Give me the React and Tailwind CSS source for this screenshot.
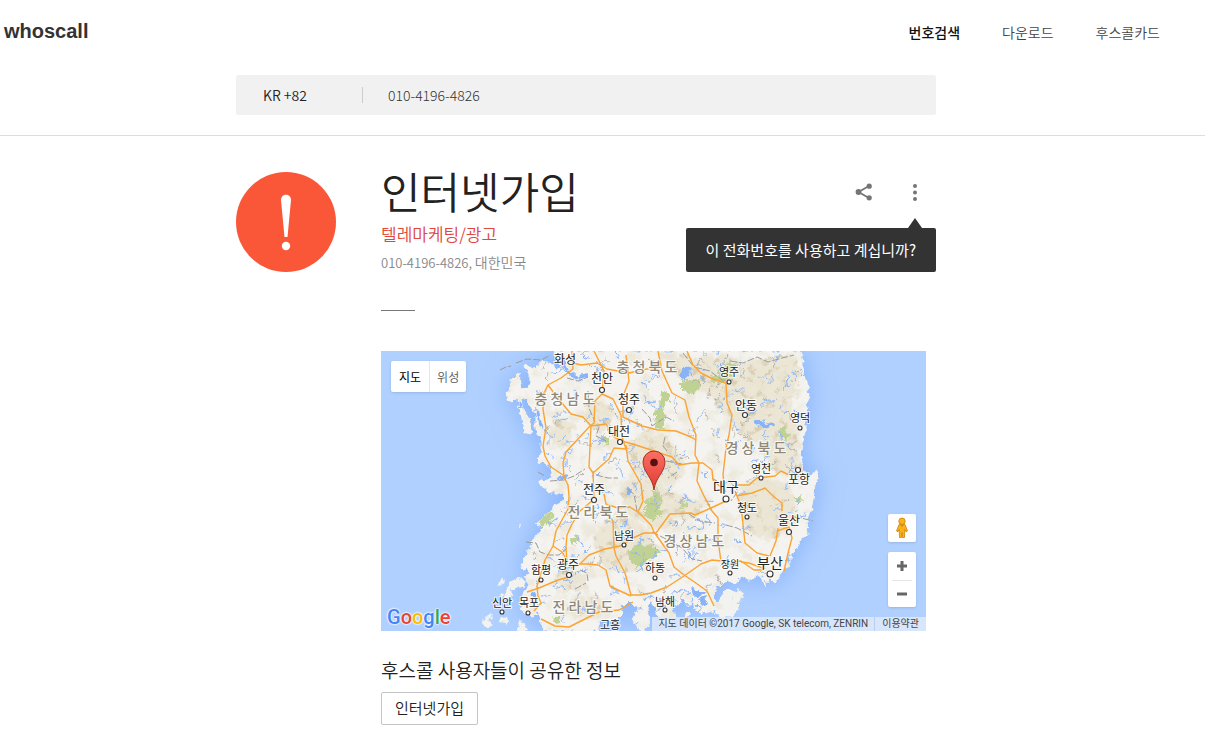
import { useState } from "react";

const LAND =
  "M172 0 L175 8 L182 18 L188 20 L200 24 L196 29 L188 26 L183 21 L167 11 L157 10 L155 18 L143 15 L145 20 L150 31 L148 36 L141 37 L139 30 L138 22 L130 30 L131 36 L125 43 L128 51 L133 48 L137 50 L140 61 L143 81 L150 83 L149 72 L147 65 L142 58 L140 49 L145 46 L151 60 L155 61 L155 81 L161 90 L161 98 L158 111 L164 113 L170 118 L172 128 L160 130 L160 133 L167 141 L170 142 L183 142 L182 150 L173 155 L167 163 L155 173 L162 177 L155 185 L148 198 L140 217 L147 219 L145 227 L148 235 L143 242 L140 250 L143 263 L152 265 L157 260 L160 268 L163 280 L216 280 L221 268 L234 270 L241 263 L239 252 L246 255 L251 250 L257 258 L252 268 L257 277 L269 275 L266 258 L269 248 L274 258 L279 268 L286 270 L294 265 L291 253 L297 254 L302 248 L307 255 L313 251 L316 260 L326 262 L334 258 L338 262 L342 255 L336 250 L332 246 L334 240 L332 235 L339 236 L346 228 L356 232 L359 226 L361 225 L369 230 L375 226 L381 225 L384 235 L389 227 L394 232 L399 225 L403 218 L409 215 L409 207 L416 198 L419 187 L427 185 L426 168 L431 155 L434 135 L437 126 L435 120 L427 126 L421 115 L420 98 L424 81 L424 61 L428 46 L426 31 L422 18 L422 8 L418 0 Z";

const ISLANDS = [
  "M136 227 l9 1 l-2 8 l-5 -2 l-5 6 l-5 -3 l1 -6 z",
  "M121 226 l2 6 l-6 3 z",
  "M124 238 l5 -3 l2 9 l-6 4 z",
  "M118 242 l5 1 l-2 5 z",
  "M103 267 l7 -4 l1 5 l-5 2 l6 4 l-6 3 l-4 -5 z",
  "M119 267 l7 -2 l1 8 l-7 -2 z",
  "M137 268 l5 2 l5 9 l-9 1 z",
  "M137 174 l3 -2 l-1 5 z",
  "M320 236 l11 -4 l4 6 l-4 6 l5 8 l-4 10 l-9 -3 l1 -10 z",
  "M336 252 l10 -14 l8 2 l-3 9 l8 5 l-6 10 l-12 4 l-7 -6 z",
  "M351 242 l7 -4 l5 8 l-5 6 l-4 11 l-6 -2 l4 -9 z",
  "M280 256 l9 2 l7 8 l-6 5 l-12 -2 z",
  "M257 268 l9 5 l-4 7 l-6 -1 z",
  "M303 263 l5 -2 l2 5 l-6 1 z",
];

const INLETS = [
  "M137 50 l7 4 l3 9 l-4 -4 l-6 -5 z",
  "M155 52 l3 10 l4 16 l-5 -4 z",
  "M144 30 l3 -7 l2 6 l-3 3 z",
  "M179 1 l5 6 l3 14 l-5 -4 z",
  "M149 240 l5 2 l3 7 l-7 -3 z",
  "M174 128 l8 -4 l7 1 l-7 4 z",
  "M182 18 l12 7 l13 -3 l-1 4 l-14 3 z",
  "M299 23 l7 -8 l4 2 l-2 7 l-6 5 z",
  "M374 68 l5 0 l5 5 l8 -2 l2 3 l-11 3 l-8 -4 z",
  "M278 247 l6 3 l-2 7 l-4 -3 z",
  "M310 236 l5 4 l8 0 l-4 6 l-7 -2 z",
  "M317 248 l8 -3 l2 8 l-7 2 z",
  "M246 135 l4 2 l-1 8 l-4 -2 z",
];

const HILLS = [
  "M283 6 q16 -5 35 3 q25 -8 43 3 q28 -10 54 -6 q8 20 1 42 q-9 16 -5 30 q-16 20 -30 12 q-22 6 -26 -16 q-17 -11 -26 -30 q-28 -4 -46 -38 z",
  "M247 95 q17 -25 36 -12 q16 18 20 38 q-9 17 -28 10 q-28 -7 -28 -36 z",
  "M237 132 q28 -14 50 6 q22 6 18 26 q-18 20 -35 10 q-25 4 -33 -42 z",
  "M222 170 q21 -12 44 10 q13 18 2 30 q-24 20 -44 7 q-18 -22 -2 -47 z",
  "M171 72 q12 -9 25 3 q-3 19 -18 23 q-11 -12 -7 -26 z",
  "M202 53 q18 -7 30 5 q2 20 -12 24 q-18 -5 -18 -29 z",
  "M362 134 q22 -16 47 2 q11 25 -5 45 q-18 14 -35 1 q-17 -23 -7 -48 z",
  "M382 72 q21 -18 36 2 q-3 21 3 44 q-16 12 -29 1 q-16 -17 -10 -47 z",
  "M174 224 q16 -12 31 3 q-4 18 -23 15 z",
  "M183 248 q20 -10 43 4 q-11 18 -35 15 z",
  "M290 152 q16 -12 33 2 q-7 19 -25 14 z",
];

const FORESTS = [
  "M299 29 l10 1 l10 -3 l2 8 l-9 6 l-13 -2 z",
  "M329 24 l7 -4 l13 -9 l9 2 l-8 8 l-6 11 l-12 -1 z",
  "M280 43 l8 -1 l0 9 l-6 7 l2 8 l-2 12 l-7 -1 l-1 -16 l4 -8 z",
  "M221 86 l6 -1 l1 8 l-5 2 z",
  "M398 78 l7 -2 l5 8 l-6 6 l-6 -5 z",
  "M156 167 l14 -6 l3 6 l-8 7 l-10 2 z",
  "M188 187 l6 -3 l4 5 l-6 6 z",
  "M248 201 l12 -9 l7 4 l9 0 l3 7 l-14 9 l-9 6 l-4 -8 l-5 -3 z",
  "M264 152 l9 -5 l7 6 l0 12 l-9 4 l-7 -4 z",
  "M413 146 l7 -2 l2 7 l-6 2 z",
  "M172 266 l8 0 l-3 6 l-6 -2 z",
  "M271 138 l7 3 l4 9 l-7 -1 z",
  "M300 150 l6 5 l-7 3 z",
  "M330 260 l5 1 l-1 8 l-4 -3 z",
];

const ROADS = [
  "M191 0 L192 18 L180 27 L167 34 L163 42 L162 58 L165 77 L162 95 L164 105 L170 116 L182 124 L187 134 L188 145 L187 158 L175 180 L172 195 L164 209 L161 219 L156 235 L157 245 L160 252 L153 260",
  "M167 34 L176 46 L190 63 L202 66 L210 75 L225 73",
  "M192 12 L200 14 L216 12 L226 18 L248 22 L266 18 L277 17",
  "M213 0 L223 20 L221 43 L214 50 L213 72 L209 75 L185 101 L182 112 L183 126",
  "M221 43 L232 48 L240 64 L241 86 L245 98 L233 97 L228 108 L212 122 L208 116 L210 75",
  "M225 73 L233 86 L241 90",
  "M212 120 L213 150",
  "M245 4 L248 30 L242 45 L242 66 L261 75 L277 79 L295 80 L310 86 L315 89",
  "M277 0 L281 20 L291 42 L304 49 L308 66 L315 84 L314 104 L318 112 L316 130 L323 145 L331 160 L337 167 L337 188 L340 211",
  "M306 0 L312 14 L320 22 L332 28 L345 32 L346 52 L351 64 L348 84 L345 97 L342 124 L344 140",
  "M241 90 L258 95 L276 101 L291 106 L298 114 L311 112 L322 112 L331 119 L332 129 L345 141",
  "M245 94 L247 110 L260 133 L262 150 L257 161 L270 174 L273 181 L288 202 L293 216 L303 224 L312 230 L326 240 L333 255",
  "M223 143 L225 153 L237 157 L249 156 L258 162",
  "M212 149 L199 160 L191 173 L186 184 L185 195 L186 214",
  "M222 158 L232 170 L233 197 L235 205 L244 222 L250 244",
  "M250 244 L259 244 L270 242 L286 236 L303 225 L320 213 L331 209 L350 211 L360 210 L373 219 L382 219",
  "M190 217 L199 213 L208 204 L224 198 L239 195 L252 187 L263 182 L275 182 L289 163 L310 162 L314 164 L330 157 L345 150",
  "M198 213 L207 213 L217 214 L225 219 L229 235 L237 239 L250 245",
  "M188 226 L177 229 L158 237 L146 241",
  "M172 195 L181 201 L187 211",
  "M160 268 L174 275 L188 276 L204 268 L218 261 L238 259 L252 251",
  "M355 134 L368 134 L376 127 L394 125 L400 120 L408 124",
  "M356 145 L371 142 L384 137 L392 145 L401 152 L401 160",
  "M354 140 L358 150 L361 164 L364 192 L376 202 L388 205",
  "M396 180 L408 176 L411 187 L407 202 L403 220",
  "M360 211 L368 212 L384 218",
  "M397 177 L395 190 L389 205",
];

const BORDERS = [
  "M119 19 l6 -3 l5 -1 m5 -3 l11 -4 l14 1 l8 -4",
  "M186 27 l11 3 l10 -4",
  "M157 121 l7 4 m5 5 l14 -1 l10 -4 l11 -7",
  "M145 191 l10 1 l4 9 l9 3 l10 0 l8 -7",
  "M261 58 l8 9 l2 8 l14 -9 l8 4 m-9 16 l-2 9 l4 5 m-1 10 l16 3 m-5 8 l-9 6",
  "M271 181 l12 6 l18 10 l10 11 l10 2",
  "M207 40 l1 17 l6 14 m4 5 l-3 9 l10 5",
  "M349 10 l13 2 l14 -6 l11 5 l14 -4 l12 -3",
  "M302 2 l11 14 l16 4 l12 9 l11 0",
  "M331 127 l11 7 l6 -5 l9 11 l-7 10",
  "M413 166 l7 1 l12 3",
  "M215 124 l12 3 l10 0 m10 12 l6 4 l3 17",
  "M345 174 l11 3 l15 8 m-63 -22 l11 7 l15 2",
  "M199 219 l7 3 l1 8 m-13 8 l11 -6",
];

const CITIES = [
  { name: "화성", x: 184, y: 13, size: 12 },
  { name: "천안", x: 221, y: 32, size: 12, dot: [221, 39] },
  { name: "청주", x: 248, y: 53, size: 12, dot: [248, 59] },
  { name: "대전", x: 238, y: 85, size: 12, dot: [239, 91] },
  { name: "영주", x: 348, y: 25, size: 11, dot: [348, 31] },
  { name: "안동", x: 365, y: 59, size: 12, dot: [364, 64] },
  { name: "영덕", x: 419, y: 71, size: 11, dot: [419, 77] },
  { name: "영천", x: 380, y: 122, size: 11, dot: [380, 127] },
  { name: "포항", x: 418, y: 133, size: 12, dot: [417, 119] },
  { name: "대구", x: 345, y: 141, size: 14, dot: [345, 148] },
  { name: "청도", x: 366, y: 161, size: 11, dot: [366, 166] },
  { name: "울산", x: 408, y: 174, size: 12, dot: [408, 181] },
  { name: "전주", x: 213, y: 143, size: 12, dot: [213, 149] },
  { name: "남원", x: 243, y: 189, size: 11, dot: [243, 194] },
  { name: "함평", x: 160, y: 223, size: 11, dot: [160, 229] },
  { name: "광주", x: 187, y: 218, size: 12, dot: [188, 224] },
  { name: "하동", x: 274, y: 221, size: 11, dot: [274, 227] },
  { name: "장원", x: 349, y: 217, size: 10, dot: [349, 222] },
  { name: "부산", x: 389, y: 217, size: 14, dot: [389, 223] },
  { name: "신안", x: 121, y: 256, size: 11, dot: [121, 261] },
  { name: "목포", x: 148, y: 256, size: 11, dot: [147, 262] },
  { name: "남해", x: 284, y: 255, size: 11, dot: [284, 259] },
  { name: "고흥", x: 229, y: 278, size: 11 },
];

const PROVINCES = [
  { name: "충 청 남 도", x: 184, y: 53 },
  { name: "충 청 북 도", x: 266, y: 21 },
  { name: "경 상 북 도", x: 375, y: 102 },
  { name: "전 라 북 도", x: 217, y: 166 },
  { name: "경 상 남 도", x: 313, y: 195 },
  { name: "전 라 남 도", x: 202, y: 261 },
];

// small streams spread over the land, always the same ones
const makeStreams = (count) => {
  let seed = 17;
  const next = () => {
    seed = (seed * 16807) % 2147483647;
    return seed / 2147483647;
  };
  const streams = [];
  for (let i = 0; i < count; i++) {
    let d = `M${Math.round(150 + next() * 275)} ${Math.round(next() * 270)}`;
    const turn = next() * Math.PI * 2;
    for (let j = 0; j < 4; j++) {
      const a = turn + (next() - 0.5) * 2.4;
      d += ` l${(Math.cos(a) * 3).toFixed(1)} ${(Math.sin(a) * 3).toFixed(1)}`;
    }
    streams.push(d);
  }
  return streams;
};

const STREAMS = makeStreams(230);
const TRAILS = makeStreams(290).slice(230);

const KoreaMap = () => {
  return (
    <svg
      className="block h-[280px] w-full font-['Noto_Sans_CJK_KR',sans-serif]"
      viewBox="0 0 545 280"
      preserveAspectRatio="xMidYMid slice"
      role="img"
      aria-label="지도"
    >
      <defs>
        <clipPath id="land">
          <path d={LAND} />
        </clipPath>
        <filter id="coast" x="-20%" y="-20%" width="140%" height="140%">
          <feGaussianBlur stdDeviation="12" />
        </filter>
        <filter id="soft">
          <feTurbulence type="fractalNoise" baseFrequency="0.09" numOctaves="3" seed="4" result="noise" />
          <feDisplacementMap in="SourceGraphic" in2="noise" scale="16" result="bent" />
          <feGaussianBlur in="bent" stdDeviation="1" />
        </filter>
        <filter id="rough">
          <feTurbulence type="fractalNoise" baseFrequency="0.2" numOctaves="3" seed="9" result="noise" />
          <feDisplacementMap in="SourceGraphic" in2="noise" scale="9" xChannelSelector="R" yChannelSelector="G" />
        </filter>
        <filter id="jagged" colorInterpolationFilters="sRGB">
          <feTurbulence type="fractalNoise" baseFrequency="0.18" numOctaves="2" seed="5" result="noise" />
          <feDisplacementMap in="SourceGraphic" in2="noise" scale="7" xChannelSelector="R" yChannelSelector="G" />
        </filter>
        <filter id="terrain" x="0" y="0" width="100%" height="100%" colorInterpolationFilters="sRGB">
          <feTurbulence type="fractalNoise" baseFrequency="0.07" numOctaves="4" seed="8" />
          <feColorMatrix values="0 0 0 0 0.86  0 0 0 0 0.82  0 0 0 0 0.68  4 0 0 0 -2" />
        </filter>
        <filter id="ridges" x="0" y="0" width="100%" height="100%" colorInterpolationFilters="sRGB">
          <feTurbulence type="fractalNoise" baseFrequency="0.12" numOctaves="3" seed="21" />
          <feColorMatrix values="0 0 0 0 0.78  0 0 0 0 0.71  0 0 0 0 0.57  5 0 0 0 -2.8" result="r" />
          <feComposite in="r" in2="SourceGraphic" operator="in" />
        </filter>
        <linearGradient id="pin" x1="0" y1="0" x2="0" y2="1">
          <stop offset="0" stopColor="#fb7064" />
          <stop offset="1" stopColor="#e03a30" />
        </linearGradient>
      </defs>
      <rect width="545" height="280" fill="#b0d0ff" />
      <path d={LAND} fill="#8ab4fa" stroke="#8ab4fa" strokeWidth="4" filter="url(#coast)" />
      <g filter="url(#jagged)">
        <path d={LAND} fill="#f4f3f0" stroke="#f4f3f0" strokeWidth="1" />
        {ISLANDS.map((d) => (
          <path key={d} d={d} fill="#f2f2ee" />
        ))}
        <g clipPath="url(#land)">
          <rect width="545" height="280" filter="url(#terrain)" opacity="0.3" />
          <g fill="#e8e2cd" opacity="0.75" filter="url(#soft)">
            {HILLS.map((d) => (
              <path key={d} d={d} />
            ))}
          </g>
          <g filter="url(#ridges)" opacity="0.5">
            {HILLS.map((d) => (
              <path key={d} d={d} />
            ))}
          </g>
          <g fill="#bfd293" filter="url(#rough)">
            {FORESTS.map((d) => (
              <path key={d} d={d} />
            ))}
          </g>
          <g fill="none" stroke="#8db6f8" strokeWidth="1">
            {STREAMS.map((d) => (
              <path key={d} d={d} />
            ))}
          </g>
          <g fill="none" stroke="#b5b3ae" strokeWidth="1">
            {TRAILS.map((d) => (
              <path key={d} d={d} />
            ))}
          </g>
          <g fill="#88b3f8">
            {INLETS.map((d) => (
              <path key={d} d={d} />
            ))}
          </g>
        </g>
      </g>
      <g fill="none" stroke="#9b9b9b" strokeWidth="1" strokeDasharray="7 2">
        {BORDERS.map((d) => (
          <path key={d} d={d} />
        ))}
      </g>
      <g fill="none" stroke="#fba434" strokeWidth="1.4" strokeLinejoin="round">
        {ROADS.map((d) => (
          <path key={d} d={d} />
        ))}
      </g>
      <g textAnchor="middle" stroke="#ffffff" strokeOpacity="0.8" strokeWidth="2" paintOrder="stroke">
        {PROVINCES.map((p) => (
          <text key={p.name} x={p.x} y={p.y} fontSize="14" fontWeight="500" fill="#8f8878">
            {p.name}
          </text>
        ))}
        {CITIES.map((c) => (
          <text key={c.name} x={c.x} y={c.y} fontSize={c.size} fill="#222222">
            {c.name}
          </text>
        ))}
      </g>
      <g fill="#ffffff" stroke="#333333" strokeWidth="1.1">
        {CITIES.filter((c) => c.dot).map((c) => (
          <circle key={c.name} cx={c.dot[0]} cy={c.dot[1]} r={c.size > 13 ? 3 : c.size > 11 ? 2.5 : 2} />
        ))}
      </g>
      <path
        d="M273 139 C272 127 262 121 262 111 A11 11 0 0 1 284 111 C284 121 274 127 273 139 Z"
        fill="url(#pin)"
        stroke="#a8302a"
        strokeWidth="1"
      />
      <circle cx="273" cy="111.500" r="3.800" fill="#5a1010" />
    </svg>
  );
};

const GoogleLogo = () => {
  return (
    <span
      className="font-[Roboto,sans-serif] text-[20px] leading-6 font-medium [text-shadow:0_0_2px_#fff,0_0_2px_#fff,0_0_2px_#fff]"
      aria-label="Google"
    >
      <span className="text-[#4285f4]">G</span>
      <span className="text-[#ea4335]">o</span>
      <span className="text-[#fbbc05]">o</span>
      <span className="text-[#4285f4]">g</span>
      <span className="text-[#34a853]">l</span>
      <span className="text-[#ea4335]">e</span>
    </span>
  );
};

const Pegman = () => {
  return (
    <svg width="14" height="22" viewBox="0 0 14 22" aria-hidden="true">
      <path
        d="M4 7.500 H10 L12.500 14 L11 14.800 L9.800 12.500 L9.500 20.500 H7.500 L7 15.500 L6.500 20.500 H4.500 L4.200 12.500 L3 14.800 L1.500 14 Z"
        fill="#fbb117"
        stroke="#c9840c"
        strokeWidth="0.8"
        strokeLinejoin="round"
      />
      <circle cx="7" cy="4.200" r="3.200" fill="#fbb117" stroke="#c9840c" strokeWidth="0.8" />
      <path d="M5 8 L7 10 L9 8 Z" fill="#d98e10" />
    </svg>
  );
};

const Header = () => {
  const [phone, setPhone] = useState("010-4196-4826");
  return (
    <header className="border-b border-[#dddddd] pb-5">
      <div className="flex h-[75px] items-start justify-between pt-5 pr-[45px] pl-1">
        <a href="#" className="font-['Liberation_Sans',sans-serif] text-[20px] leading-[22px] font-bold text-[#333333]">
          whoscall
        </a>
        <nav className="flex gap-[42px] text-[14px] leading-6 text-[#444444]">
          <a href="#" className="font-medium text-[#111111]">번호검색</a>
          <a href="#" className="font-[350]">다운로드</a>
          <a href="#" className="font-[350]">후스콜카드</a>
        </nav>
      </div>
      <div className="pr-[33px]">
        <form className="mx-auto flex h-10 max-w-[700px] items-center rounded-xs bg-[#f1f1f1]">
          <button type="button" className="w-[126px] pl-[27px] text-left text-[14px] font-[350]">
            KR +82
          </button>
          <input
            type="text"
            aria-label="전화번호"
            className="h-4 min-w-0 flex-1 border-l border-[#cccccc] pl-[25px] text-[14px] font-light text-[#333333] outline-none"
            value={phone}
            onChange={(e) => setPhone(e.target.value)}
          />
        </form>
      </div>
    </header>
  );
};

const AlertBadge = () => {
  return (
    <svg className="shrink-0" width="100" height="100" viewBox="0 0 100 100" aria-hidden="true">
      <circle cx="50" cy="50" r="50" fill="#f95738" />
      <path d="M45 28 C45 21 55 21 55 28 L51.500 65 H48.500 Z" fill="#ffffff" />
      <circle cx="50" cy="74" r="4.200" fill="#ffffff" />
    </svg>
  );
};

const Actions = () => {
  return (
    <div className="relative flex h-10 gap-[33px] pr-3">
      <button type="button" aria-label="공유">
        <svg width="18" height="18" viewBox="0 0 18 18" fill="#757575">
          <path d="M14 3 L3.500 9 L14 15" fill="none" stroke="#757575" strokeWidth="1.800" />
          <circle cx="3.500" cy="9" r="2.900" />
          <circle cx="14.200" cy="3.200" r="2.600" />
          <circle cx="14.200" cy="14.800" r="2.600" />
        </svg>
      </button>
      <button type="button" aria-label="메뉴">
        <svg width="18" height="18" viewBox="0 0 18 18" fill="#757575">
          <circle cx="9" cy="3" r="2" />
          <circle cx="9" cy="9.500" r="2" />
          <circle cx="9" cy="16" r="2" />
        </svg>
      </button>
      <div
        role="tooltip"
        className="absolute top-[56px] right-0 rounded-xs bg-[#333333] px-5 py-[10px] text-[15px] leading-6 whitespace-nowrap text-white"
      >
        <span className="absolute -top-[10px] right-[14px] border-x-[7px] border-b-[10px] border-x-transparent border-b-[#333333]" />
        이 전화번호를 사용하고 계십니까?
      </div>
    </div>
  );
};

const MapPanel = () => {
  return (
    <div className="relative mr-[10px] overflow-hidden">
      <KoreaMap />
      <div className="absolute top-[10px] left-[10px] flex h-[31px] rounded-xs bg-white text-[12px] shadow">
        <button type="button" className="border-r border-[#e6e6e6] px-2 text-black">지도</button>
        <button type="button" className="px-[7px] font-[350] text-[#565656]">위성</button>
      </div>
      <div className="absolute bottom-[2px] left-[6px]">
        <GoogleLogo />
      </div>
      <div className="absolute right-[10px] bottom-6 flex w-7 flex-col gap-[10px]">
        <button type="button" aria-label="스트리트 뷰" className="flex h-7 items-center justify-center rounded-xs bg-white shadow">
          <Pegman />
        </button>
        <div className="flex flex-col rounded-xs bg-white shadow">
          <button type="button" aria-label="확대" className="flex h-7 items-center justify-center">
            <svg width="12" height="12" viewBox="0 0 12 12" stroke="#666666" strokeWidth="3">
              <path d="M1 6 H11 M6 1 V11" />
            </svg>
          </button>
          <div className="mx-1 h-px bg-[#e6e6e6]" />
          <button type="button" aria-label="축소" className="flex h-[26px] items-center justify-center">
            <svg width="12" height="12" viewBox="0 0 12 12" stroke="#666666" strokeWidth="3">
              <path d="M1 6 H11" />
            </svg>
          </button>
        </div>
      </div>
      <div className="absolute right-0 bottom-0 flex h-[14px] bg-[#e2ebfa]/80 font-[Roboto,'Noto_Sans_CJK_KR',sans-serif] text-[10px] leading-[14px] text-[#444444]">
        <span className="px-[6px]">지도 데이터 ©2017 Google, SK telecom, ZENRIN</span>
        <a href="#" className="border-l border-[#b9cfee] px-[7px]">이용약관</a>
      </div>
    </div>
  );
};

const App = () => {
  return (
    <div className="bg-white font-['Noto_Sans_CJK_KR',sans-serif] text-[#222222]">
      <Header />
      <main className="pt-9 pr-[33px] pb-6">
        <div className="mx-auto flex max-w-[700px] gap-[45px]">
          <AlertBadge />
          <div className="min-w-0 flex-1">
            <div className="flex items-start justify-between">
              <div>
                <h1 className="text-[43px] leading-9 font-[350]">인터넷가입</h1>
                <p className="mt-3 text-[17px] leading-7 font-[350] text-[#e0483e]">텔레마케팅/광고</p>
                <p className="mt-[2px] text-[13px] leading-6 font-[350] text-[#888888]">
                  010-4196-4826, <span className="text-[14px]">대한민국</span>
                </p>
              </div>
              <Actions />
            </div>
            <hr className="mt-[35px] mb-10 w-[34px] border-[#777777]" />
            <MapPanel />
            <h2 className="mt-6 text-[19px] leading-[30px] font-[350]">후스콜 사용자들이 공유한 정보</h2>
            <button type="button" className="mt-[7px] h-[33px] rounded-xs border border-[#c4c4c4] px-[13px] text-[15px] font-[350]">
              인터넷가입
            </button>
          </div>
        </div>
      </main>
    </div>
  );
};

export default App;
